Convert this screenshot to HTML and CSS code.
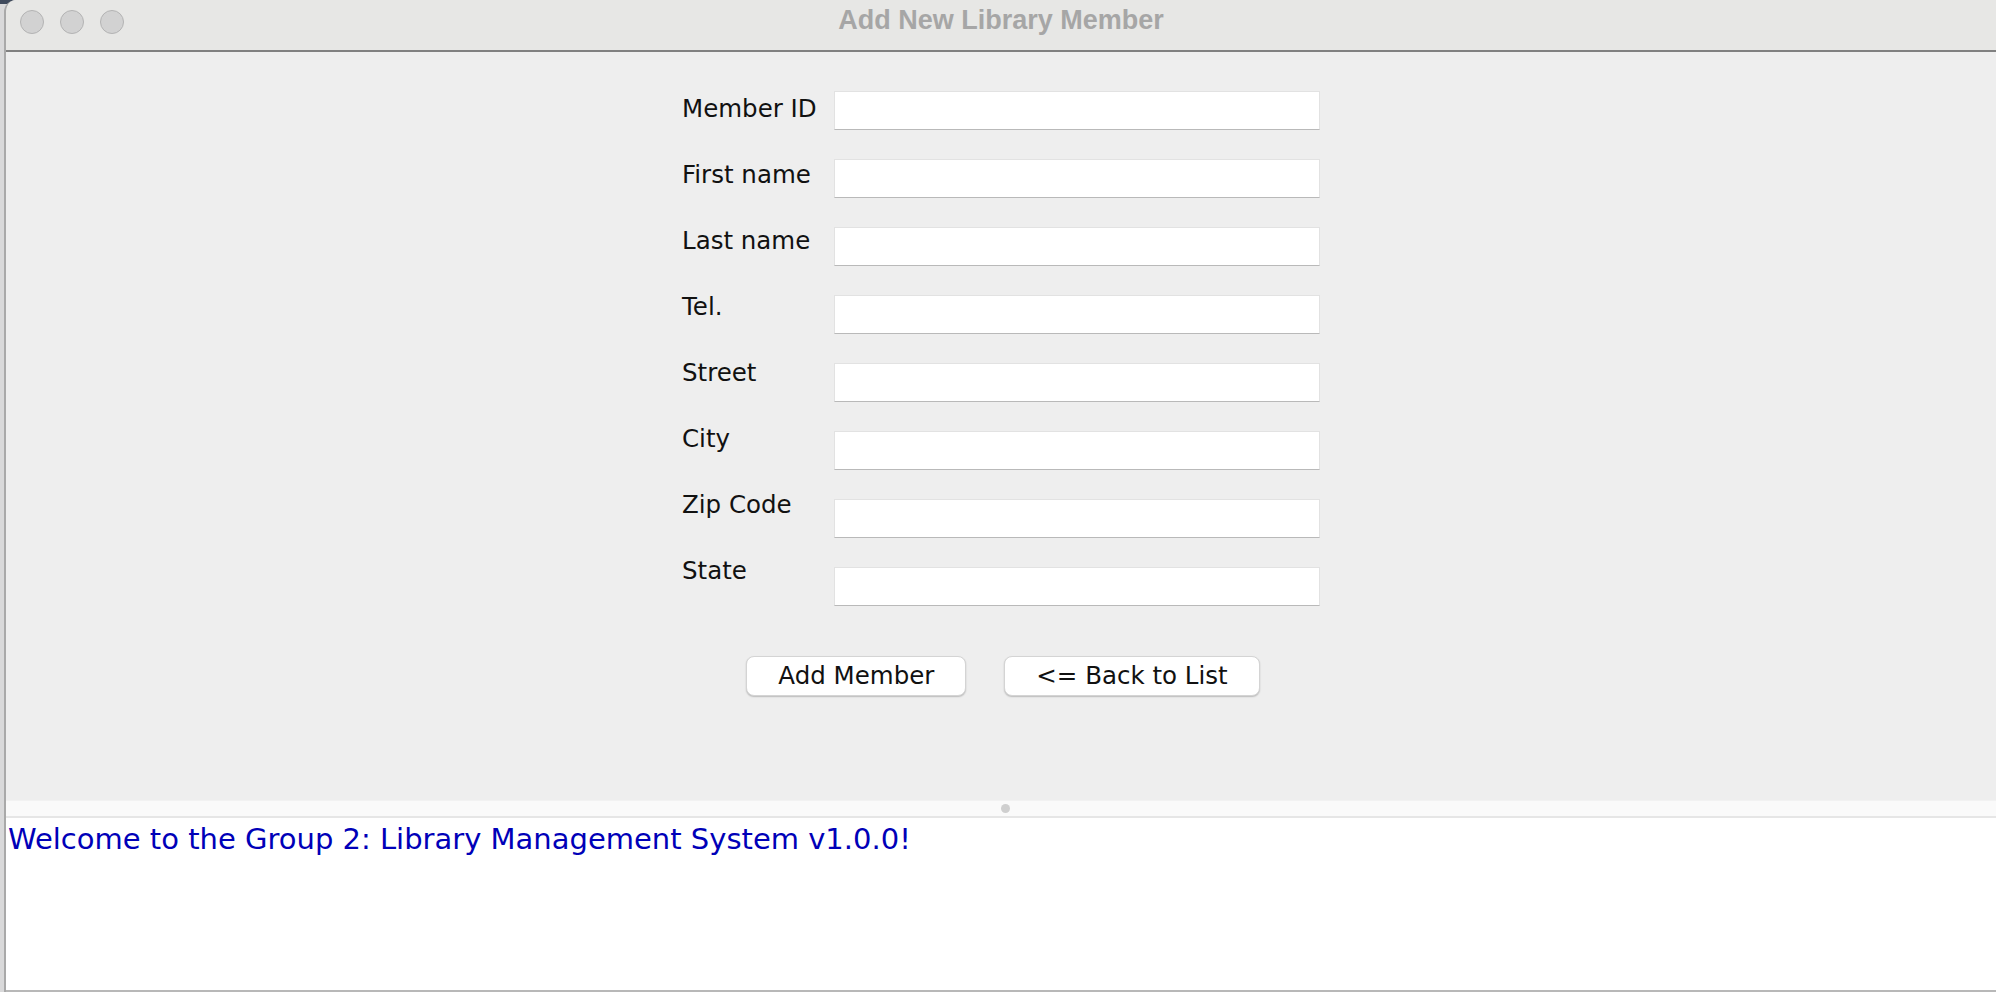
FILE: index.html
```html
<!DOCTYPE html>
<html lang="en">
<head>
<meta charset="utf-8">
<title>Add New Library Member</title>
<link rel="stylesheet" href="styles.css">
</head>
<body>
<div class="desk">
  <div class="window">
    <header class="titlebar">
      <div class="lights">
        <span class="light"></span>
        <span class="light"></span>
        <span class="light"></span>
      </div>
      <h1 class="title">Add New Library Member</h1>
      <div class="spacer"></div>
    </header>
    <main class="content">
      <div class="form">
        <div class="labels">
          <div class="label">Member ID</div>
          <div class="label">First name</div>
          <div class="label">Last name</div>
          <div class="label">Tel.</div>
          <div class="label">Street</div>
          <div class="label">City</div>
          <div class="label">Zip Code</div>
          <div class="label">State</div>
        </div>
        <div class="fields">
          <input class="field" type="text">
          <input class="field" type="text">
          <input class="field" type="text">
          <input class="field" type="text">
          <input class="field" type="text">
          <input class="field" type="text">
          <input class="field" type="text">
          <input class="field" type="text">
        </div>
      </div>
      <div class="actions">
        <button class="btn" type="button">Add Member</button>
        <button class="btn" type="button">&lt;= Back to List</button>
      </div>
    </main>
    <div class="splitter"><span class="grip"></span></div>
    <div class="console">
      <p class="welcome">Welcome to the Group 2: Library Management System v1.0.0!</p>
    </div>
  </div>
</div>
</body>
</html>
```
FILE: styles.css
```css
* {
  box-sizing: border-box;
}

html, body {
  margin: 0;
  padding: 0;
  width: 1996px;
  height: 992px;
  overflow: hidden;
}

body {
  background: #d9d9da;
  font-family: "DejaVu Sans", "Noto Sans", sans-serif;
}

.desk {
  display: flex;
  height: 992px;
  padding-left: 4px;
  background: linear-gradient(180deg, #3f4a5c 0, #3f4a5c 4px, #d9d9da 4px);
}

.window {
  flex: 1;
  display: flex;
  flex-direction: column;
  height: 992px;
  border-left: 2px solid #a9a9a9;
  border-top-left-radius: 12px;
  overflow: hidden;
  background: #eeeeee;
}

.titlebar {
  height: 52px;
  flex: none;
  display: grid;
  grid-template-columns: 1fr auto 1fr;
  align-items: start;
  background: #e7e7e5;
  border-bottom: 2px solid #808080;
}

.lights {
  display: flex;
  gap: 16px;
  padding-left: 14px;
  padding-top: 10px;
}

.light {
  width: 24px;
  height: 24px;
  border-radius: 50%;
  background: #d2d2d2;
  border: 1px solid #b3b3b3;
}

.title {
  margin: 0;
  padding-top: 7px;
  font-family: "Liberation Sans", Arial, sans-serif;
  font-weight: bold;
  font-size: 27px;
  line-height: 27px;
  color: #a6a6a6;
  white-space: nowrap;
}

.content {
  flex: 1;
  display: flex;
  flex-direction: column;
  align-items: center;
  background: #eeeeee;
}

.form {
  display: flex;
  align-items: flex-start;
}

.labels {
  width: 152px;
  padding-top: 24px;
  display: flex;
  flex-direction: column;
}

.label {
  height: 66px;
  line-height: 66px;
  font-size: 24.5px;
  color: #111111;
  white-space: nowrap;
}

.fields {
  padding-top: 39px;
  display: flex;
  flex-direction: column;
  gap: 29px;
}

.field {
  display: block;
  width: 486px;
  height: 39px;
  margin: 0;
  padding: 0 6px;
  background: #ffffff;
  border: 1px solid #e2e2e2;
  border-bottom: 1px solid #b9b9b9;
  border-radius: 0;
  outline: none;
  font: inherit;
}

.actions {
  display: flex;
  gap: 38px;
  margin-top: 50px;
  padding-left: 4px;
}

.btn {
  height: 40px;
  padding: 0 31px;
  margin: 0;
  background: #ffffff;
  border: 1px solid #d4d4d4;
  border-radius: 8px;
  box-shadow: 0 1px 1.5px rgba(0, 0, 0, 0.22);
  font-family: "DejaVu Sans", "Noto Sans", sans-serif;
  font-size: 24.5px;
  line-height: 38px;
  color: #111111;
  white-space: nowrap;
}

.splitter {
  height: 18px;
  flex: none;
  display: flex;
  align-items: center;
  justify-content: center;
  background: #fafafa;
  border-top: 1px solid #f2f2f2;
  border-bottom: 2px solid #e6e6e6;
  padding-left: 8px;
}

.grip {
  width: 9px;
  height: 9px;
  border-radius: 50%;
  background: #cfcfcf;
}

.console {
  height: 174px;
  flex: none;
  background: #ffffff;
  border-bottom: 2px solid #b8b8b8;
  padding: 4px 0 0 2px;
}

.welcome {
  margin: 0;
  font-size: 29px;
  line-height: 34px;
  color: #0000b8;
  white-space: nowrap;
}
```
